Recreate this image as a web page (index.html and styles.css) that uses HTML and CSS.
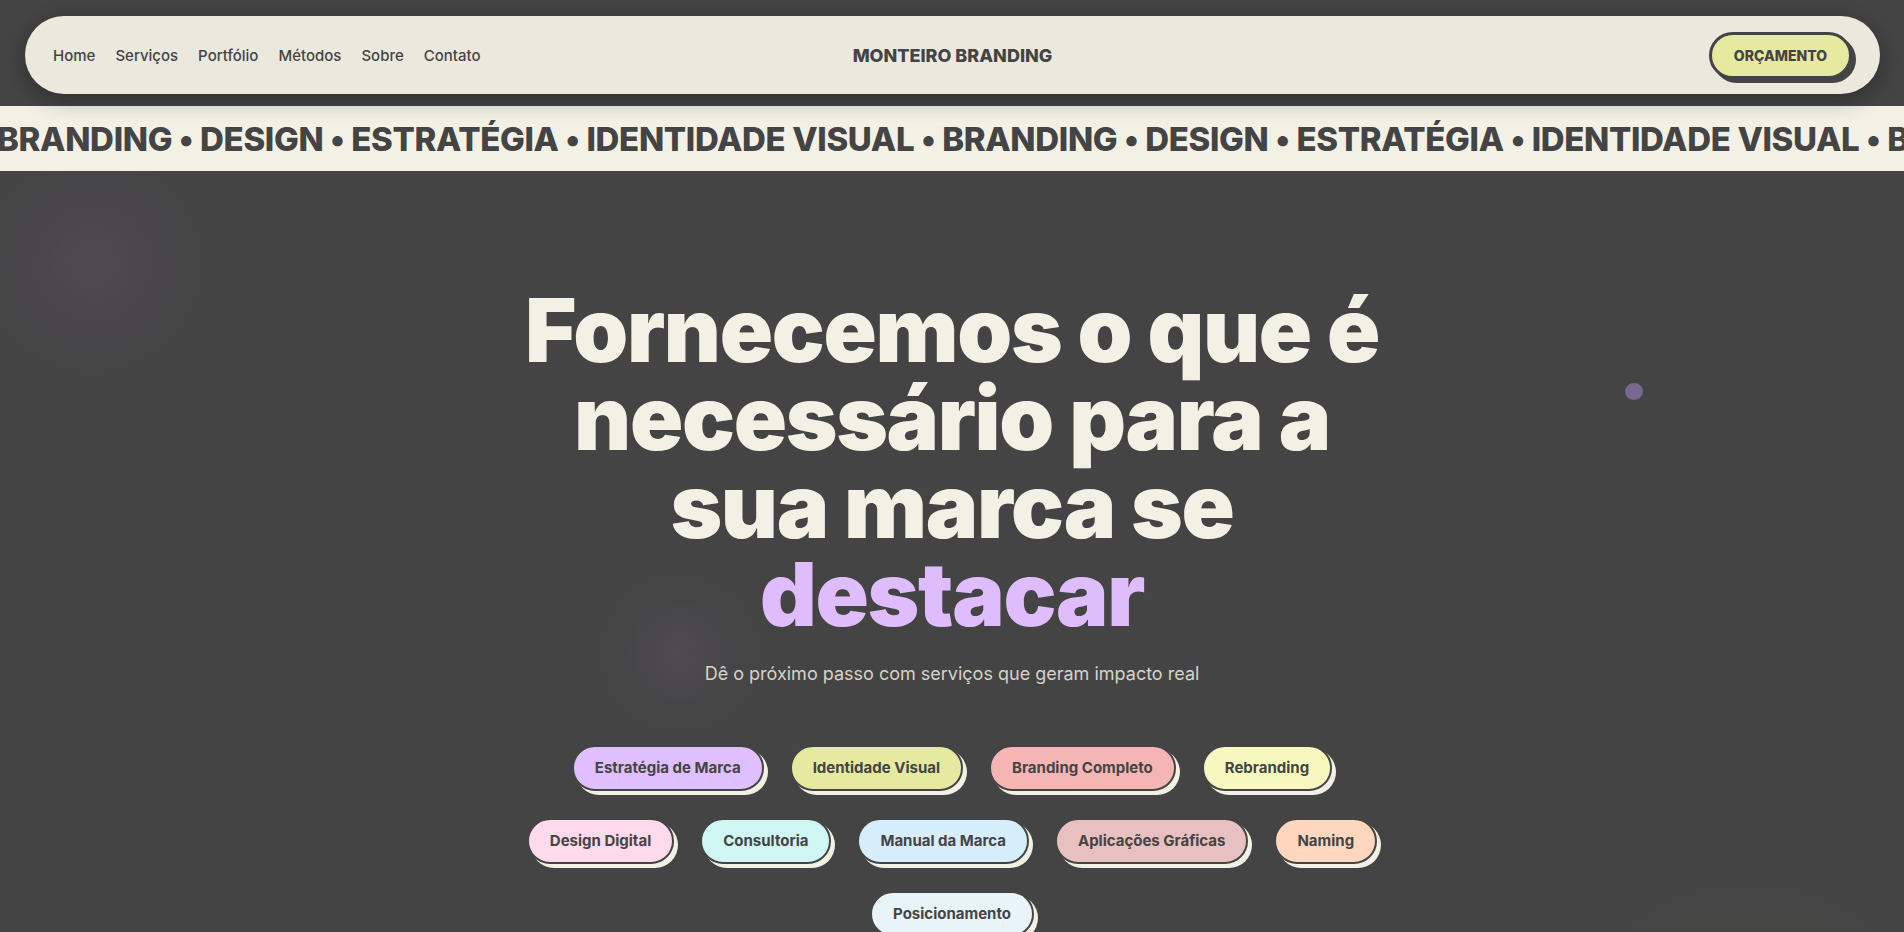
FILE: index.html
```html
<!DOCTYPE html>
<html lang="pt-BR">
<head>
<meta charset="utf-8">
<title>Monteiro Branding</title>
<link rel="stylesheet" href="styles.css">
</head>
<body>
<header class="header">
  <nav class="navbar">
    <ul class="nav-links">
      <li><a href="#">Home</a></li>
      <li><a href="#">Serviços</a></li>
      <li><a href="#">Portfólio</a></li>
      <li><a href="#">Métodos</a></li>
      <li><a href="#">Sobre</a></li>
      <li><a href="#">Contato</a></li>
    </ul>
    <div class="logo">MONTEIRO BRANDING</div>
    <div class="nav-cta"><a href="#" class="btn-quote">ORÇAMENTO</a></div>
  </nav>
</header>
<div class="marquee">
  <div class="marquee-track">
    <span>BRANDING • DESIGN • ESTRATÉGIA • IDENTIDADE VISUAL • </span><span>BRANDING • DESIGN • ESTRATÉGIA • IDENTIDADE VISUAL • </span><span>BRANDING • DESIGN • ESTRATÉGIA • IDENTIDADE VISUAL • </span>
  </div>
</div>
<main class="hero">
  <div class="glow glow-tl"></div>
  <div class="glow glow-mid"></div>
  <div class="glow glow-br"></div>
  <div class="dot"></div>
  <div class="hero-inner">
    <h1 class="hero-title">Fornecemos o que é necessário para a sua marca se <span class="accent">destacar</span></h1>
    <p class="hero-sub">Dê o próximo passo com serviços que geram impacto real</p>
    <ul class="pills">
      <li class="pill pill-lavender">Estratégia de Marca</li>
      <li class="pill pill-lime">Identidade Visual</li>
      <li class="pill pill-salmon">Branding Completo</li>
      <li class="pill pill-yellow">Rebranding</li>
      <li class="pill pill-pink">Design Digital</li>
      <li class="pill pill-cyan">Consultoria</li>
      <li class="pill pill-blue">Manual da Marca</li>
      <li class="pill pill-rose">Aplicações Gráficas</li>
      <li class="pill pill-peach">Naming</li>
      <li class="pill pill-ice">Posicionamento</li>
    </ul>
  </div>
</main>
</body>
</html>
```
FILE: styles.css
```css
* { box-sizing: border-box; }
html, body { margin: 0; padding: 0; }
body {
  background: #444444;
  font-family: Inter, "Noto Sans", "Liberation Sans", sans-serif;
  color: #444444;
  overflow: hidden;
  height: 932px;
}

.header {
  padding: 16px 24px 12px 25px;
  position: relative;
  z-index: 3;
}
.navbar {
  height: 78px;
  background: #ebe9de;
  border-radius: 40px;
  display: grid;
  grid-template-columns: 1fr auto 1fr;
  align-items: center;
  padding: 0 28px 0 28px;
  box-shadow: 0 6px 22px rgba(0,0,0,0.32);
}
.nav-links {
  list-style: none;
  margin: 0;
  padding: 0;
  display: flex;
  gap: 20px;
}
.nav-links a {
  color: #444444;
  text-decoration: none;
  font-size: 15px;
  font-weight: 500;
}
.logo {
  font-size: 18px;
  font-weight: 800;
  color: #444444;
}
.nav-cta {
  display: flex;
  justify-content: flex-end;
}
.btn-quote {
  display: inline-block;
  background: #e6e9a0;
  color: #444444;
  text-decoration: none;
  font-size: 14px;
  font-weight: 800;
  line-height: 17px;
  padding: 12px 22px;
  border: 3px solid #444444;
  border-radius: 999px;
  box-shadow: 4px 4px 0 #444444;
}

.marquee {
  background: #f3f1e6;
  height: 65px;
  overflow: hidden;
  display: flex;
  align-items: center;
  position: relative;
  z-index: 1;
}
.marquee-track {
  display: flex;
  white-space: nowrap;
  transform: translateX(-3px);
  font-size: 33px;
  font-weight: 800;
  color: #444444;
  letter-spacing: -0.01em;
}
.marquee-track span { white-space: pre; }

.hero {
  position: relative;
  padding-top: 115px;
}
.glow {
  position: absolute;
  border-radius: 50%;
  pointer-events: none;
}
.glow-tl {
  left: -17px; top: -18px;
  width: 220px; height: 220px;
  background: radial-gradient(circle, rgba(80,74,84,0.9) 0%, rgba(76,72,78,0.5) 45%, rgba(68,68,68,0) 70%);
}
.glow-mid {
  left: 600px; top: 402px;
  width: 160px; height: 160px;
  background: radial-gradient(circle, rgba(80,76,82,0.9) 0%, rgba(74,72,76,0.4) 45%, rgba(68,68,68,0) 70%);
}
.glow-br {
  left: 1550px; top: 710px;
  width: 400px; height: 400px;
  background: radial-gradient(circle, rgba(82,80,73,1) 0%, rgba(75,74,70,0.6) 40%, rgba(68,68,68,0) 70%);
}
.dot {
  position: absolute;
  left: 1625px; top: 212px;
  width: 18px; height: 17px;
  border-radius: 50%;
  background: #7a6893;
}

.hero-inner {
  position: relative;
  max-width: 900px;
  margin: 0 auto;
  text-align: center;
}
.hero-title {
  margin: 0;
  font-size: 88px;
  line-height: 88px;
  font-weight: 900;
  letter-spacing: -0.015em;
  color: #f3f1e6;
}
.accent { color: #dfbcfc; }
.hero-sub {
  margin: 22px 0 0;
  font-size: 18px;
  line-height: 28px;
  color: #d6d3c9;
}
.pills {
  list-style: none;
  margin: 57px 0 0;
  padding: 0;
  display: flex;
  flex-wrap: wrap;
  justify-content: center;
  gap: 27px 26px;
}
.pill {
  font-size: 15px;
  font-weight: 700;
  line-height: 18px;
  color: #444444;
  padding: 12px 21px;
  border: 2px solid #444444;
  border-radius: 999px;
  box-shadow: 4px 4px 0 #f3f1e6;
}
.pill-lavender { background: #dfbfff; }
.pill-lime { background: #e6e9a0; }
.pill-salmon { background: #f5b5b5; }
.pill-yellow { background: #f6f8c0; }
.pill-pink { background: #ffd9ec; }
.pill-cyan { background: #cff6f2; }
.pill-blue { background: #d6edfb; }
.pill-rose { background: #e8c0c1; }
.pill-peach { background: #ffd7be; }
.pill-ice { background: #e8f4f8; }
```
